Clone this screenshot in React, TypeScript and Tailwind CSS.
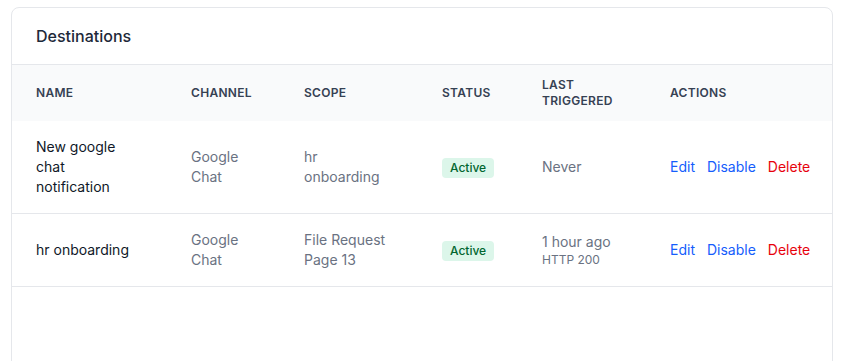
type Row = {
  name: string;
  channel: string;
  scope: string;
  last: string;
  lastDetail?: string;
};

const rows: Row[] = [
  { name: 'New google chat notification', channel: 'Google Chat', scope: 'hr onboarding', last: 'Never' },
  { name: 'hr onboarding', channel: 'Google Chat', scope: 'File Request Page 13', last: '1 hour ago', lastDetail: 'HTTP 200' },
];

export default function App() {
  return (
    <div className="min-h-screen bg-white px-[11px] pt-[7px] font-['Inter',sans-serif]">
      <div className="min-h-[400px] rounded-lg border border-gray-200 bg-white">
        {/* Header */}
        <div className="border-b border-gray-200 px-6 py-4">
          <h2 className="text-base font-medium text-gray-800">Destinations</h2>
        </div>

        <table className="w-full table-fixed border-collapse text-left">
          <colgroup>
            <col className="w-[155px]" />
            <col className="w-[113px]" />
            <col className="w-[138px]" />
            <col className="w-[100px]" />
            <col className="w-[128px]" />
            <col />
          </colgroup>
          <thead className="bg-gray-50">
            <tr className="text-xs font-semibold uppercase tracking-wide text-gray-700">
              <th className="px-6 py-3 font-semibold">Name</th>
              <th className="px-6 py-3 font-semibold">Channel</th>
              <th className="px-6 py-3 font-semibold">Scope</th>
              <th className="px-6 py-3 font-semibold">Status</th>
              <th className="px-6 py-3 font-semibold">Last Triggered</th>
              <th className="px-6 py-3 font-semibold">Actions</th>
            </tr>
          </thead>
          <tbody className="text-sm">
            {rows.map((r) => (
              <tr key={r.name} className="border-b border-gray-200">
                <td className="px-6 py-4 text-gray-900">
                  <div className="max-w-[100px]">{r.name}</div>
                </td>
                <td className="px-6 py-4 text-gray-500">{r.channel}</td>
                <td className="px-6 py-4 text-gray-500">{r.scope}</td>
                <td className="px-6 py-4">
                  <span className="inline-block rounded bg-[#dcf6ea] px-2 py-0.5 text-xs font-medium text-green-800">
                    Active
                  </span>
                </td>
                <td className="px-6 py-4 text-gray-500">
                  <div>{r.last}</div>
                  {r.lastDetail && <div className="text-xs">{r.lastDetail}</div>}
                </td>
                <td className="px-6 py-4">
                  <div className="flex gap-3">
                    <button className="text-blue-600">Edit</button>
                    <button className="text-blue-600">Disable</button>
                    <button className="text-red-600">Delete</button>
                  </div>
                </td>
              </tr>
            ))}
          </tbody>
        </table>
      </div>
    </div>
  );
}
